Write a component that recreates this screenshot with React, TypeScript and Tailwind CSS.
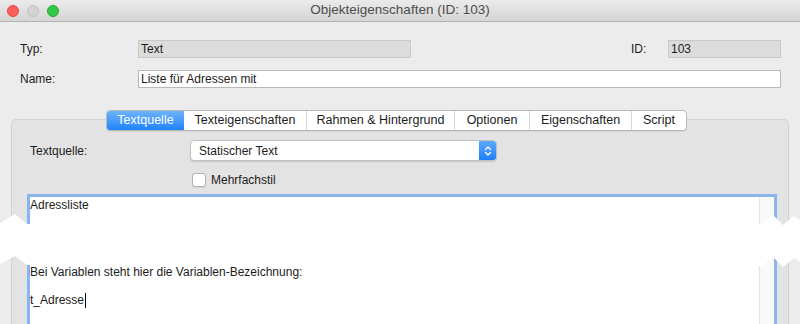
import React from "react";

const tabs = ["Textquelle", "Texteigenschaften", "Rahmen & Hintergrund", "Optionen", "Eigenschaften", "Script"];
const tabWidths = ["w-[77px]", "w-[122px]", "w-[148px]", "w-[75px]", "w-[102px]", "w-[55px]"];

function TrafficLights() {
    return (
        <div className="flex items-center gap-[8px] pl-[7px]">
            <span className="block size-[12px] rounded-full border border-[#e2463f] bg-[#fc605c]" />
            <span className="block size-[12px] rounded-full border border-[#c2c2c2] bg-[#d3d3d3]" />
            <span className="block size-[12px] rounded-full border border-[#1fa830] bg-[#34c84a]" />
        </div>
    );
}

export default function App() {
    return (
        <div
            className="relative h-[324px] w-[800px] overflow-hidden bg-[#ececec] text-[12px] text-[#1c1c1c]"
            style={{ fontFamily: '"Liberation Sans", Arial, sans-serif' }}
        >
            {/* Title bar */}
            <div className="relative flex h-[22px] items-center border-b border-[#b3b3b3] bg-gradient-to-b from-[#ebebeb] to-[#d5d5d5]">
                <TrafficLights />
                <div className="absolute inset-0 flex items-center justify-center text-[13.5px] text-[#4d4d4d]">
                    Objekteigenschaften (ID: 103)
                </div>
            </div>

            {/* Header fields */}
            <div className="flex flex-col gap-[12px] pt-[18px] pl-[20px] pr-[19px]">
                <div className="flex h-[18px] items-center">
                    <span className="w-[118px]">Typ:</span>
                    <div className="flex h-[18px] w-[273px] items-center border border-[#c9c9c9] bg-[#dcdcdc] pl-[2px]">Text</div>
                    <span className="ml-auto w-[37px]">ID:</span>
                    <div className="flex h-[18px] w-[113px] items-center border border-[#c9c9c9] bg-[#dcdcdc] pl-[2px]">103</div>
                </div>
                <div className="flex h-[18px] items-center">
                    <span className="w-[118px]">Name:</span>
                    <div className="flex h-[18px] flex-1 items-center border border-[#b9b9b9] bg-white pl-[2px]">Liste für Adressen mit</div>
                </div>
            </div>

            {/* Tab panel */}
            <div className="mx-[11px] mt-[31px] h-[260px] rounded-[5px] border border-[#d3d3d3] bg-[#e3e3e3]">
                <div className="-mt-[10px] ml-[94px] flex h-[21px] w-fit overflow-hidden rounded-[4px] border border-[#b8b8b8] bg-white text-[12.5px] shadow-[0_1px_0_rgba(0,0,0,0.06)]">
                    {tabs.map((t, i) => (
                        <div
                            key={t}
                            className={`${tabWidths[i]} flex items-center justify-center ${
                                i === 0
                                    ? "bg-gradient-to-b from-[#6cb3fa] to-[#1a82fb] text-white"
                                    : "border-l border-[#d6d6d6] text-[#1c1c1c]"
                            } ${i === 1 ? "border-l-0" : ""}`}
                        >
                            {t}
                        </div>
                    ))}
                </div>

                <div className="mt-[9px] flex h-[21px] items-center pl-[18px]">
                    <span className="w-[160px]">Textquelle:</span>
                    <div className="flex h-[21px] w-[307px] items-stretch overflow-hidden rounded-[4px] border border-[#c1c1c1] bg-white shadow-[0_1px_1px_rgba(0,0,0,0.12)]">
                        <span className="flex flex-1 items-center pl-[8px]">Statischer Text</span>
                        <span className="flex w-[17px] items-center justify-center bg-gradient-to-b from-[#5aa9fb] to-[#1c7ffa]">
                            <svg width="8" height="12" viewBox="0 0 8 12" fill="none" stroke="white" strokeWidth="1.4" strokeLinecap="round" strokeLinejoin="round">
                                <path d="M1.5 4.5 L4 2 L6.5 4.5" />
                                <path d="M1.5 7.5 L4 10 L6.5 7.5" />
                            </svg>
                        </span>
                    </div>
                </div>

                <div className="mt-[11px] flex h-[15px] items-center pl-[180px]">
                    <span className="block size-[14px] rounded-[3px] border border-[#b3b3b3] bg-white shadow-[0_1px_1px_rgba(0,0,0,0.08)]" />
                    <span className="ml-[5px]">Mehrfachstil</span>
                </div>

                {/* Text area */}
                <div className="mt-[7px] ml-[15px] mr-[11px] flex h-[200px] border-[3px] border-[#8ab4ee] bg-white">
                    <div className="flex-1 leading-[16px]">
                        <div>Adressliste</div>
                        <div className="mt-[51px]">Bei Variablen steht hier die Variablen-Bezeichnung:</div>
                        <div className="mt-[12px] flex items-center">
                            t_Adresse
                            <span className="ml-px inline-block h-[15px] w-px bg-black" />
                        </div>
                    </div>
                    <div className="w-[15px] border-l border-[#e4e4e4] bg-[#f9f9f9]" />
                </div>
            </div>

            {/* Cut marker over the page */}
            <svg className="pointer-events-none absolute top-0 left-0" width="800" height="324" viewBox="0 0 800 324">
                <polygon
                    fill="white"
                    points="0,223 15,214 27,224 762,224 773,215 783,225 794,216 800,220 800,262 794,258 783,267 773,257 762,266 27,265 15,256 0,264"
                />
            </svg>
        </div>
    );
}
